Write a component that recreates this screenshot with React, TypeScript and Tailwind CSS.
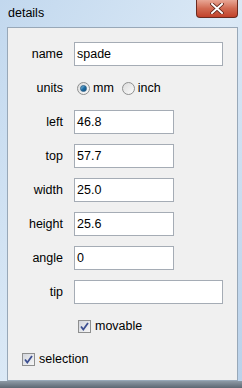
import React from "react";

const font = { fontFamily: '"Liberation Sans", Arial, sans-serif' };

function Radio({ checked }: { checked?: boolean }) {
  return (
    <span className="relative inline-flex h-[13px] w-[13px] items-center justify-center rounded-full border border-[#8e8f8f] bg-gradient-to-br from-[#dcdcdc] to-[#fbfbfb]">
      {checked && (
        <span className="h-[7px] w-[7px] rounded-full border border-[#2c628b] bg-gradient-to-br from-[#8ccbe9] via-[#1f6ea5] to-[#0e4c7c]" />
      )}
    </span>
  );
}

function Check() {
  return (
    <span className="inline-flex h-[13px] w-[13px] items-center justify-center border border-[#8e8f8f] bg-gradient-to-br from-[#d3d6dd] to-[#f6f6f6]">
      <svg width="9" height="9" viewBox="0 0 9 9">
        <path d="M1 4.5 L3.3 7.5 L8 1" fill="none" stroke="#3c4f91" strokeWidth="1.8" />
      </svg>
    </span>
  );
}

function Field({ value = "", wide }: { value?: string; wide?: boolean }) {
  return (
    <div
      className={`flex h-[24px] items-center border border-[#a5acb5] bg-white pl-[2px] text-[12.5px] text-black ${
        wide ? "w-[149px]" : "w-[100px]"
      }`}
    >
      {value}
    </div>
  );
}

export default function App() {
  const rows: { label: string; value?: string; wide?: boolean; units?: boolean }[] = [
    { label: "name", value: "spade", wide: true },
    { label: "units", units: true },
    { label: "left", value: "46.8" },
    { label: "top", value: "57.7" },
    { label: "width", value: "25.0" },
    { label: "height", value: "25.6" },
    { label: "angle", value: "0" },
    { label: "tip", value: "", wide: true },
  ];

  return (
    <div
      style={font}
      className="flex h-[388px] w-[242px] flex-col overflow-hidden bg-gradient-to-br from-[#c2d8ee] via-[#dbe9f6] to-[#b9d1ea]"
    >
      {/* title bar */}
      <div className="relative flex h-[27px] shrink-0 items-center pl-[8px] text-[12.5px] text-black">
        details
        <div className="absolute right-[4px] top-0 flex h-[18px] w-[42px] items-center justify-center rounded-b-[4px] border border-t-0 border-[#6b2a1f] bg-gradient-to-b from-[#e8a695] via-[#d16a52] to-[#c1412a]">
          <svg width="14" height="11" viewBox="0 0 14 11">
            <path d="M2 1 L12 10 M12 1 L2 10" stroke="#5a1f14" strokeWidth="3.6" strokeLinecap="square" />
            <path d="M2 1 L12 10 M12 1 L2 10" stroke="#ffffff" strokeWidth="2" strokeLinecap="square" />
          </svg>
        </div>
      </div>

      {/* client area */}
      <div className="ml-[7px] mr-[4px] flex flex-1 flex-col border border-[#98a8b8] bg-[#f0f0f0] text-[12.5px] text-black">
        <div className="grid grid-cols-[55px_1fr] items-center gap-x-[11px] gap-y-[10px] pt-[14px]">
          {rows.map((r) => (
            <React.Fragment key={r.label}>
              <div className="text-right">{r.label}</div>
              {r.units ? (
                <div className="flex h-[24px] items-center">
                  <span className="ml-[3px] flex"><Radio checked /></span>
                  <span className="ml-[3px]">mm</span>
                  <span className="ml-[8px] flex"><Radio /></span>
                  <span className="ml-[3px]">inch</span>
                </div>
              ) : (
                <Field value={r.value} wide={r.wide} />
              )}
            </React.Fragment>
          ))}
          <div />
          <div className="flex h-[24px] items-center">
            <span className="ml-[4px] flex"><Check /></span>
            <span className="ml-[4px]">movable</span>
          </div>
        </div>
        <div className="mt-[9px] flex h-[24px] items-center pl-[14px]">
          <Check />
          <span className="ml-[4px]">selection</span>
        </div>
      </div>

      {/* bottom frame */}
      <div className="h-[7px] shrink-0 bg-gradient-to-b from-[#8e9aa6] to-[#5d6873]" />
    </div>
  );
}
